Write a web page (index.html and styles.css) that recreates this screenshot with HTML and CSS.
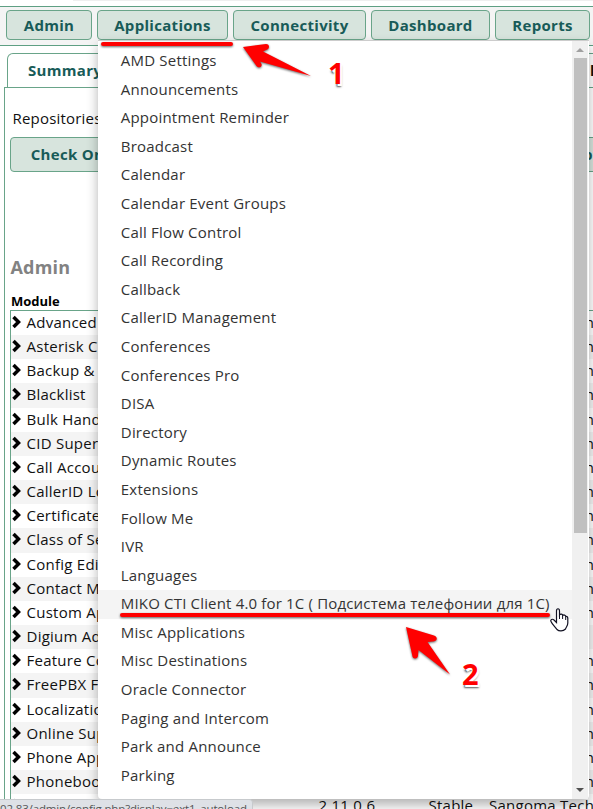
FILE: index.html
```html
<!DOCTYPE html>
<html lang="en">
<head>
<meta charset="utf-8">
<title>Module Administration</title>
<link rel="stylesheet" href="styles.css">
</head>
<body>
<div class="page">
  <div class="topline"></div>
  <nav class="navbar">
    <a class="btn nav-admin">Admin</a>
    <a class="btn nav-apps">Applications</a>
    <a class="btn nav-conn">Connectivity</a>
    <a class="btn nav-dash">Dashboard</a>
    <a class="btn nav-reports">Reports</a>
  </nav>
  <div class="tabs"><div class="tab">Summary</div><div class="tab tab-last">l</div></div>
  <main class="panel">
    <div class="repos"><span>Repositories</span></div>
    <div class="actions"><a class="btn check">Check Online</a><a class="btn upload">Upload</a></div>
    <h2>Admin</h2>
    <div class="module-head">Module</div>
    <div class="modules" id="modules"></div>
  </main>
  <ul class="menu">
    <li>AMD Settings</li><li>Announcements</li><li>Appointment Reminder</li><li>Broadcast</li><li>Calendar</li><li>Calendar Event Groups</li><li>Call Flow Control</li><li>Call Recording</li><li>Callback</li><li>CallerID Management</li><li>Conferences</li><li>Conferences Pro</li><li>DISA</li><li>Directory</li><li>Dynamic Routes</li><li>Extensions</li><li>Follow Me</li><li>IVR</li><li>Languages</li><li class="active"><span class="long">MIKO CTI Client 4.0 for 1C ( Подсистема телефонии для 1С)</span></li><li>Misc Applications</li><li>Misc Destinations</li><li>Oracle Connector</li><li>Paging and Intercom</li><li>Park and Announce</li><li>Parking</li><li>Property Management</li>
  </ul>
  <div class="scrollbar"><i class="up"></i><div class="thumb"></div><i class="down"></i></div>
  <div class="status">02.83/admin/config.php?display=ext1_autoload</div>
  <svg class="marks" viewBox="0 0 593 809" width="593" height="809">
    <g class="shadowed">
      <path class="rule" d="M103 44H231M122 615H548"/>
      <path class="arrow" d="M243 47L266 44C270 44 270 49 266 50L263 51.500L311 76L260 61.500L261.500 64C262.500 67 258.500 68.500 256.500 66Z"/>
      <path class="arrow" d="M406 627L434 635.500C439 637.500 436.500 642 432.500 641.500L427.500 642L450 674.500L418.500 650L418 656C417 659.500 413 659 412.500 656.500Z"/>
    </g>
    <path class="hand" d="M556.500 622.500V611C556.500 608 559.500 608 559.500 611V615C560.500 613.500 562.500 614 562.700 615.500C563.700 614.500 565.500 615 565.700 616.500C567 616 567.800 617 567.800 618.500V623C567.800 626 566 627 565.500 629C563 631.500 559 631.500 557 629.500C555.500 627 552.500 625 551 621.500C550 619.500 552.500 618.500 554 620Z"/>
    <path class="finger" d="M559.500 615V619M562.600 615.500V619M565.700 617V620"/>
  </svg>
  <div class="digit one">1</div>
  <div class="digit two">2</div>
</div>
<script src="modules.js"></script>
</body>
</html>
```
FILE: modules.js
```js
const names = ["Advanced Recovery", "Asterisk CLI", "Backup & Restore", "Blacklist", "Bulk Handler", "CID Superfecta", "Call Accounting", "CallerID Lookup", "Certificate Manager", "Class of Service", "Config Edit", "Contact Manager", "Custom Applications", "Digium Addons", "Feature Code Admin", "FreePBX Framework", "Localization Updates", "Online Support", "Phone Apps", "Phonebook", "Presence State"];
const table = document.getElementById("modules");
for (const name of names) {
  const row = document.createElement("div");
  row.className = "row";
  const publisher = name.startsWith("Digium") ? "Digium" : "Sangoma Technologies";
  for (const text of [name, "2.11.0.6", "Stable", publisher]) {
    const cell = document.createElement("span");
    cell.textContent = text;
    row.append(cell);
  }
  row.firstChild.insertAdjacentHTML("afterbegin", '<svg class="chevron" viewBox="0 0 10 14"><path d="M2 2L7 7L2 12"/></svg>');
  table.append(row);
}
```
FILE: styles.css
```css
* { box-sizing: border-box; }
body { margin: 0; overflow: hidden; font: 15px/24px "Open Sans", sans-serif; color: #111; background: #fff; }
.page { position: relative; width: 593px; height: 809px; overflow: hidden; }
.topline { height: 6px; background: linear-gradient(90deg, transparent 73px, #efefef 73px) 0 0 / 100% 1px no-repeat; }
.navbar { display: flex; gap: 5px; height: 40px; padding: 3px 0 0 6px; border-top: 1px solid #5e9f83; border-bottom: 1px solid #5e9f83; background: #f4f4f4; }
.btn { flex: none; display: block; border: 1px solid #69a489; border-radius: 4px; background: #d7e4dd; color: #185b58; font-weight: 700; letter-spacing: .3px; text-align: center; white-space: nowrap; }
.navbar .btn { height: 30px; line-height: 28px; }
.nav-admin { width: 86px; }
.nav-apps { width: 131px; }
.nav-conn { width: 133px; }
.nav-dash { width: 119px; }
.nav-reports { width: 95px; }
.tabs { display: flex; justify-content: space-between; height: 41px; padding: 7px 0 0 7px; }
.tab { width: 120px; border: 1px solid #69a489; border-bottom: 0; border-radius: 6px 6px 0 0; padding: 4px 20px; color: #185b58; font-weight: 700; letter-spacing: .3px; white-space: nowrap; }
.tab-last { width: 60px; margin-right: -20px; padding: 4px 0 4px 36px; color: #111; overflow: hidden; }
.panel { margin-left: 4px; padding: 18px 0 0 5px; width: 700px; border: 1px solid #69a489; }
.repos { padding-left: 2.500px; letter-spacing: .2px; }
.actions { display: flex; margin-top: 7px; }
.actions .btn { height: 35px; line-height: 33px; }
.check { width: 144px; }
.upload { width: 100px; margin-left: 395px; }
h2 { margin: 83px 0 0; padding-left: .5px; font-size: 18px; line-height: 24px; color: #828282; letter-spacing: .2px; }
.module-head { margin-top: 11px; padding-left: 1px; font-size: 13px; line-height: 22px; height: 20px; font-weight: 700; color: #000; }
.modules { border: 1px solid #69a489; }
.row { display: grid; grid-template-columns: 307.500px 110px 60.500px 200px; height: 24.170px; line-height: 22px; white-space: nowrap; letter-spacing: .25px; }
.row:nth-child(even) { background: #f4f4f4; }
.row span:first-child { display: flex; align-items: center; gap: 4.500px; height: 22px; }
.chevron { width: 11px; height: 14px; fill: none; stroke: #000; stroke-width: 3.500; }
.menu { position: absolute; left: 98px; top: 40px; width: 491px; height: 759px; margin: 0; padding: 6px 0; overflow: hidden; list-style: none; color: #333; background: #fff; border-top: 1px solid #ccc; border-radius: 0 0 4px 4px; box-shadow: 0 6px 12px rgba(0,0,0,.3); }
.menu li { height: 28.600px; padding-left: 22.800px; line-height: 26px; white-space: nowrap; letter-spacing: .2px; }
.menu .active { background: linear-gradient(#f4f4f4, #f4f4f4) 0 0 / 474px 100% no-repeat; }
.long { letter-spacing: .17px; }
.scrollbar { position: absolute; left: 572px; top: 41px; width: 16px; height: 758px; background: #f0f0f0; }
.thumb { margin: 6px 0 0 2px; width: 13px; height: 475px; background: #c0c0c0; }
.up, .down { display: block; width: 0; border: 4px solid transparent; margin-left: 4px; }
.up { margin-top: 3px; border-bottom-color: #a0a0a0; }
.down { margin-top: 255px; border-top-color: #505050; }
.status { position: absolute; left: 0; top: 799px; width: 253px; height: 20px; padding-right: 6px; border: 1px solid #c7cacd; border-left: 0; border-radius: 0 4px 0 0; background: #dee1e6; color: #555; font-size: 11.500px; line-height: 17px; text-align: right; white-space: nowrap; letter-spacing: -.15px; }
.marks { position: absolute; left: 0; top: 0; }
.shadowed { filter: drop-shadow(0 1px 1px rgba(0,0,0,.6)); }
.rule { fill: none; stroke: #f00; stroke-width: 4; stroke-linecap: round; }
.arrow { fill: #f00; }
.hand { fill: #fff; stroke: #112; stroke-width: 1.200; }
.finger { fill: none; stroke: #112; stroke-width: 1; }
.digit { position: absolute; font-family: "Noto Sans", sans-serif; font-weight: 700; font-size: 29px; line-height: 30px; color: #f00; text-shadow: 1px 0 #fff, -1px 0 #fff, 2px 2px #fff, 1px 3px 2px #555; }
.one { left: 328px; top: 58px; }
.two { left: 462px; top: 659px; }
```
